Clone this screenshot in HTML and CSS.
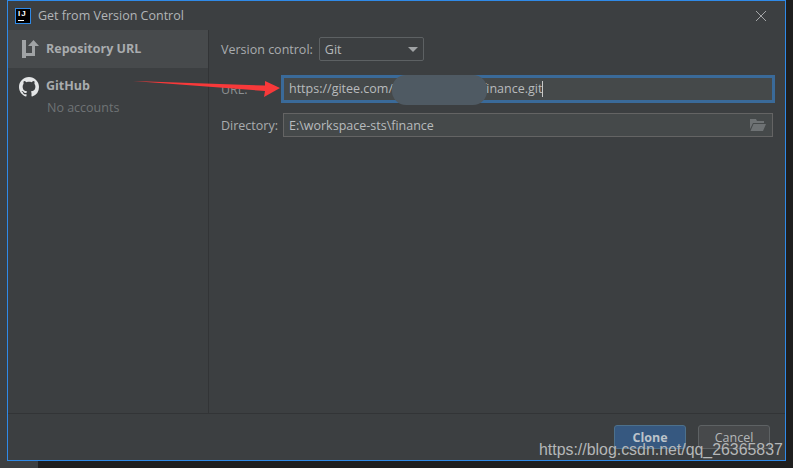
FILE: index.html
```html
<!DOCTYPE html>
<html lang="en">
<head>
  <meta charset="UTF-8">
  <title>Get from Version Control</title>
  <link rel="stylesheet" href="styles.css">
</head>
<body>
  <div class="screen">
    <div class="dialog">
      <div class="titlebar">
        <div class="app-icon"><span class="app-icon-text">IJ</span><span class="app-icon-line"></span></div>
        <span class="title">Get from Version Control</span>
        <svg class="close" width="12" height="12" viewBox="0 0 12 12"><path d="M1 1L11 11M11 1L1 11" stroke="#a4a6a8" stroke-width="1" fill="none"/></svg>
      </div>
      <div class="main">
        <div class="sidebar">
          <div class="side-item active">
            <svg class="side-icon" width="18" height="18" viewBox="0 0 18 18"><path d="M1 0H5V18H1ZM5 13H11V6H7L12.500 0L18 6H14V16H5Z" fill="#a0a3a5"/></svg>
            <span class="side-name">Repository URL</span>
          </div>
          <div class="side-item github">
            <svg class="side-icon" width="20" height="20" viewBox="0 0 16 16"><path fill="#e4e6e7" d="M8 0C3.580 0 0 3.580 0 8c0 3.540 2.290 6.530 5.470 7.590.4.070.55-.17.55-.38 0-.19-.01-.82-.01-1.490-2.010.37-2.530-.49-2.690-.94-.09-.23-.48-.94-.82-1.130-.28-.15-.68-.52-.01-.53.63-.01 1.080.58 1.230.82.720 1.210 1.870.87 2.330.66.070-.52.280-.87.510-1.070-1.780-.2-3.640-.89-3.640-3.950 0-.87.310-1.590.820-2.150-.08-.2-.36-1.020.08-2.120 0 0 .67-.21 2.200.82.640-.18 1.320-.27 2-.27s1.360.09 2 .27c1.530-1.040 2.200-.82 2.200-.82.440 1.100.160 1.920.08 2.120.51.560.82 1.270.82 2.150 0 3.070-1.870 3.750-3.650 3.950.290.250.540.730.540 1.480 0 1.070-.01 1.930-.01 2.200 0 .210.150.460.550.380A8.010 8.010 0 0 0 16 8c0-4.420-3.580-8-8-8z"/></svg>
            <div class="side-text">
              <span class="side-name">GitHub</span>
              <span class="side-sub">No accounts</span>
            </div>
          </div>
        </div>
        <div class="form">
          <div class="row row-vcs">
            <span class="label">Version control:</span>
            <div class="select">
              <span>Git</span>
              <span class="caret"></span>
            </div>
          </div>
          <div class="row row-url">
            <span class="label label-url">URL:</span>
            <div class="input focused">
              <span>https://gitee.com/</span><span class="gap"></span><span>finance.git</span><span class="cursor"></span>
            </div>
          </div>
          <div class="row row-dir">
            <span class="label">Directory:</span>
            <div class="input dir">
              <span>E:\workspace-sts\finance</span>
              <svg class="folder" width="16" height="12" viewBox="0 0 16 12"><path d="M0 0H6L7 2H14V4H3L0 10ZM3.500 5H16L13 12H0.500Z" fill="#6e7274"/></svg>
            </div>
          </div>
        </div>
      </div>
      <div class="footer">
        <div class="btn primary">Clone</div>
        <div class="btn">Cancel</div>
      </div>
    </div>
    <div class="blur"></div>
    <svg class="arrow" width="150" height="26" viewBox="0 0 150 26"><path d="M0 4L132 8.500L132 4L147 11L131 20L132 14Z" fill="#f8393a"/></svg>
    <div class="watermark">https://blog.csdn.net/qq_26365837</div>
  </div>
</body>
</html>
```

FILE: styles.css
```css
* {
  box-sizing: border-box;
}
html, body {
  margin: 0;
  height: 100%;
  overflow: hidden;
}
body {
  background: #1f1f1f;
  font-family: "Open Sans", "Noto Sans", sans-serif;
  font-size: 12.500px;
  color: #b4b7b9;
}
.screen {
  position: relative;
  width: 793px;
  height: 468px;
  padding-left: 7px;
  background: linear-gradient(#3c3f41, #3c3f41) left top / 38px 100% no-repeat, #1f1f1f;
}
.dialog {
  width: 779px;
  height: 461px;
  border: 1px solid #2f8ae8;
  background: #3c3f41;
  display: flex;
  flex-direction: column;
}
.titlebar {
  height: 29px;
  display: flex;
  align-items: center;
  padding: 0 18px 0 7px;
}
.app-icon {
  width: 16px;
  height: 16px;
  background: #000;
  border: 1px solid #2f8ae8;
  position: relative;
  margin-right: 7px;
}
.app-icon-text {
  display: block;
  font-family: "Liberation Sans", Arial, sans-serif;
  font-size: 8px;
  line-height: 9px;
  font-weight: 700;
  letter-spacing: 1px;
  color: #fff;
  padding-left: 2px;
}
.app-icon-line {
  position: absolute;
  left: 2px;
  bottom: 2px;
  width: 6px;
  height: 1px;
  background: #fff;
}
.title {
  flex: 1;
  color: #b2b5b7;
}
.main {
  flex: 1;
  display: flex;
  border-bottom: 1px solid #323436;
}
.sidebar {
  width: 201px;
  border-right: 1px solid #323436;
}
.side-item {
  display: flex;
  align-items: center;
}
.side-item.active {
  height: 38px;
  background: #474a4c;
  padding: 0 0 1px 13px;
  gap: 7px;
}
.side-item.github {
  padding: 9px 0 0 11px;
  gap: 7px;
  align-items: flex-start;
}
.side-text {
  display: flex;
  flex-direction: column;
  gap: 5px;
}
.side-name {
  font-weight: 700;
  color: #a9acae;
}
.side-sub {
  color: #6f7375;
  padding-left: 1px;
}
.form {
  flex: 1;
  padding: 7px 12px 0 12px;
}
.row {
  display: flex;
  align-items: center;
}
.label {
  color: #a9acae;
  margin-right: 5px;
  white-space: nowrap;
}
.row-vcs {
  height: 24px;
}
.select {
  width: 105px;
  height: 24px;
  border: 1px solid #5d6163;
  border-radius: 2px;
  display: flex;
  align-items: center;
  justify-content: space-between;
  padding: 0 5px;
  margin-left: 1px;
  color: #b4b7b9;
}
.caret {
  width: 0;
  height: 0;
  border-left: 5px solid transparent;
  border-right: 5px solid transparent;
  border-top: 5px solid #a0a3a5;
}
.row-url {
  margin-top: 14px;
  height: 28px;
}
.label-url {
  width: 60px;
  margin-right: 0;
  color: #8d9092;
}
.input {
  flex: 1;
  background: #45494a;
  border: 1px solid #646464;
  display: flex;
  align-items: center;
  padding: 0 5px;
  color: #b8bbbd;
  white-space: nowrap;
}
.input.focused {
  height: 28px;
  margin-right: -2px;
  border: 3px solid #3a6a99;
  padding: 0 4px 1px 5px;
}
.gap {
  width: 89px;
}
.cursor {
  width: 1px;
  height: 16px;
  background: #c8c8c8;
}
.row-dir {
  margin-top: 10px;
}
.input.dir {
  height: 24px;
  justify-content: space-between;
}
.folder {
  margin-right: 1px;
}
.footer {
  height: 46px;
  display: flex;
  justify-content: flex-end;
  gap: 12px;
  padding: 11px 15px 0 0;
}
.btn {
  width: 72px;
  height: 24px;
  border: 1px solid #5e6264;
  border-radius: 3px;
  background: #47494b;
  color: #b4b7b9;
  display: flex;
  align-items: center;
  justify-content: center;
}
.btn.primary {
  background: #365880;
  border-color: #4c708c;
  color: #bcc3ca;
  font-weight: 700;
}
/* things lying over the window */
.blur {
  position: absolute;
  left: 392px;
  top: 75px;
  width: 95px;
  height: 30px;
  border-radius: 14px;
  background: #4f5a63;
}
.arrow {
  position: absolute;
  left: 133px;
  top: 77px;
}
.watermark {
  position: absolute;
  left: 539px;
  top: 441px;
  font-family: "Liberation Sans", Arial, sans-serif;
  font-size: 15.900px;
  color: #b5b7b8;
  white-space: nowrap;
}
```
